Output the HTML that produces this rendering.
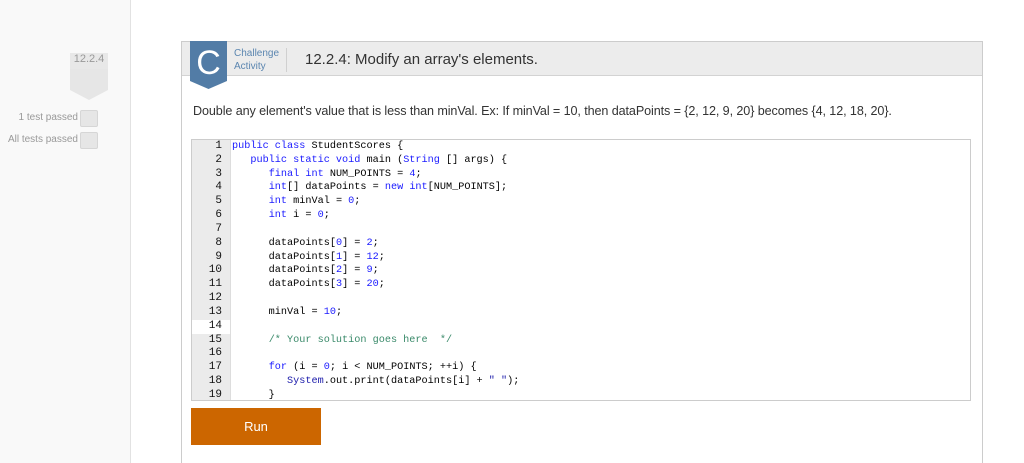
<!DOCTYPE html>
<html><head><style>
html,body{margin:0;width:1024px;height:463px;overflow:hidden}
body{background:#fff;font-family:"Liberation Sans",sans-serif;position:relative}
.side{position:absolute;left:0;top:0;width:130px;height:463px;background:#f9f9f9;border-right:1px solid #e2e2e2}
.tag{position:absolute;left:70px;top:53px;width:38px;height:16px;font-size:11px;color:#999;text-align:center;border-bottom:1px solid #bbb;background:#e8e8e8}
.card{position:absolute;left:181px;top:41px;width:800px;height:430px;border:1px solid #ccc;background:#fff}
.hdr{position:absolute;left:0;top:0;width:800px;height:33px;background:#ececec;border-bottom:1px solid #d3d3d3}
.code{position:absolute;left:191px;top:139px;width:778px;height:260px;border:1px solid #ccc;overflow:hidden;background:#fff}
.gut{position:absolute;left:0;top:0;width:38px;height:260px;background:#ebebeb;border-right:1px solid #ddd}
.ln{font-family:"Liberation Mono",monospace;font-size:10.2px;line-height:13.83px;}
.gut div{text-align:right;padding-right:8px;color:#111;font-size:11px}
.txt{position:absolute;left:40px;top:0;white-space:pre;color:#000}
.k{color:#1a1aff}.n{color:#1a1aff}.c{color:#3a8a6a}.s{color:#1a1aaa}
</style></head><body>
<div class="side">
<div class="tag">12.2.4</div>
<svg style="position:absolute;left:70px;top:69px" width="39" height="32"><polygon points="0,0 38,0 38,21 19,31 0,21" fill="#e6e6e6"/></svg>
<div style="position:absolute;right:52px;top:112px;font-size:10px;color:#999">1 test passed</div>
<div style="position:absolute;left:80px;top:110px;width:16px;height:15px;background:#e6e6e6;border:1px solid #d6d6d6;border-radius:2px"></div>
<div style="position:absolute;right:52px;top:134px;font-size:10px;color:#999">All tests passed</div>
<div style="position:absolute;left:80px;top:132px;width:16px;height:15px;background:#e6e6e6;border:1px solid #d6d6d6;border-radius:2px"></div>
</div>
<div class="card">
<div class="hdr"></div>
<svg style="position:absolute;left:8px;top:-1px" width="38" height="50"><polygon points="0,0 37,0 37,40 18.5,48 0,40" fill="#527ca6"/><text x="18.5" y="33" font-family="Liberation Sans" font-size="34" fill="#fff" text-anchor="middle">C</text></svg>
<div style="position:absolute;left:52px;top:5px;font-size:10px;line-height:13px;color:#5b86b0">Challenge<br>Activity</div>
<div style="position:absolute;left:104px;top:6px;width:1px;height:24px;background:#d0d0d0"></div>
<div style="position:absolute;left:123px;top:9px;font-size:15px;color:#333">12.2.4: Modify an array's elements.</div>
<div style="position:absolute;left:11px;top:62px;font-size:12.6px;color:#333;letter-spacing:-0.1px">Double any element's value that is less than minVal. Ex: If minVal = 10, then dataPoints = {2, 12, 9, 20} becomes {4, 12, 18, 20}.</div>
</div>
<div class="code">
<div class="gut ln"><div>1</div><div>2</div><div>3</div><div>4</div><div>5</div><div>6</div><div>7</div><div>8</div><div>9</div><div>10</div><div>11</div><div>12</div><div>13</div><div style="background:#fff">14</div><div>15</div><div>16</div><div>17</div><div>18</div><div>19</div></div>
<div class="txt ln"><span class="k">public class</span> StudentScores {
   <span class="k">public static void</span> main (<span class="k">String</span> [] args) {
      <span class="k">final int</span> NUM_POINTS = <span class="n">4</span>;
      <span class="k">int</span>[] dataPoints = <span class="k">new int</span>[NUM_POINTS];
      <span class="k">int</span> minVal = <span class="n">0</span>;
      <span class="k">int</span> i = <span class="n">0</span>;

      dataPoints[<span class="n">0</span>] = <span class="n">2</span>;
      dataPoints[<span class="n">1</span>] = <span class="n">12</span>;
      dataPoints[<span class="n">2</span>] = <span class="n">9</span>;
      dataPoints[<span class="n">3</span>] = <span class="n">20</span>;

      minVal = <span class="n">10</span>;

      <span class="c">/* Your solution goes here  */</span>

      <span class="k">for</span> (i = <span class="n">0</span>; i &lt; NUM_POINTS; ++i) {
         <span class="s">System</span>.out.print(dataPoints[i] + <span class="s">" "</span>);
      }</div>
</div>
<div style="position:absolute;left:191px;top:408px;width:130px;height:37px;background:#cc6600;color:#fff;font-size:13px;text-align:center;line-height:37px">Run</div>
</body></html>
